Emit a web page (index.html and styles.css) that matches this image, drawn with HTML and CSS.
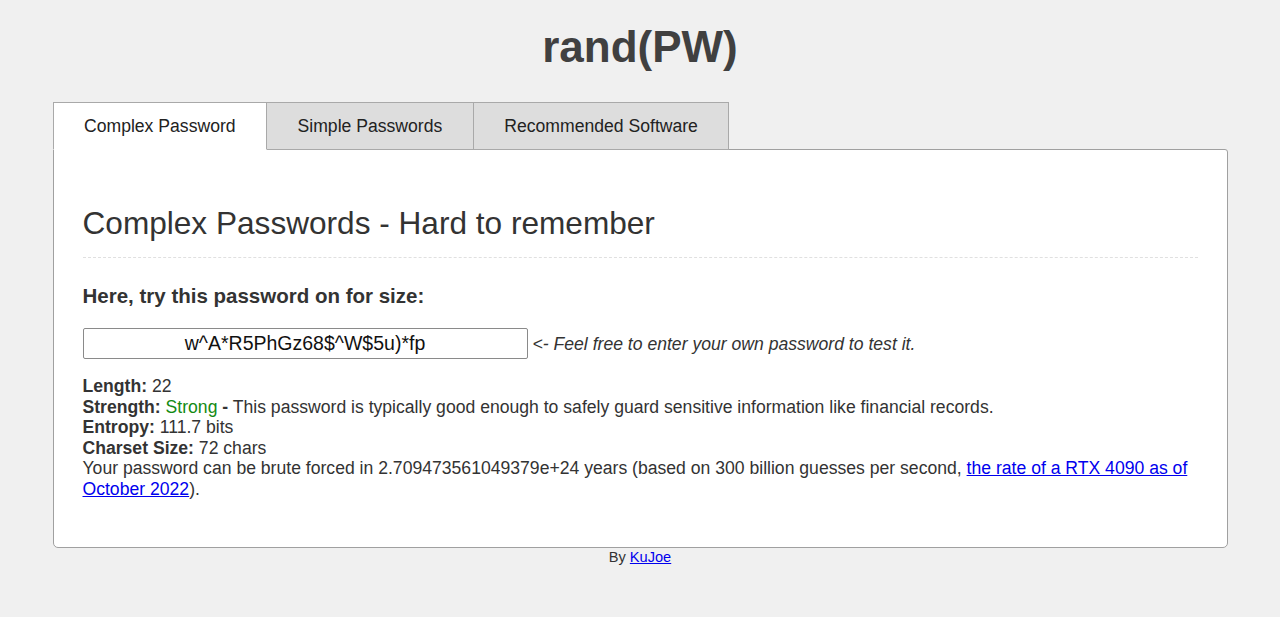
FILE: index.html
```html
<!DOCTYPE html>
<html>
<head>
<meta charset="utf-8">
<title>rand(PW)</title>
<link rel="stylesheet" href="styles.css">
</head>
<body>
<h1 class="site-title">rand(PW)</h1>
<div class="wrap">
  <div class="tabs">
    <div class="tab active">Complex Password</div>
    <div class="tab">Simple Passwords</div>
    <div class="tab">Recommended Software</div>
  </div>
  <div class="panel">
    <h2 class="panel-title">Complex Passwords - Hard to remember</h2>
    <h3 class="lead">Here, try this password on for size:</h3>
    <div class="pw-row">
      <input class="pw-input" type="text" value="w^A*R5PhGz68$^W$5u)*fp">
      <span class="pw-note">&lt;- Feel free to enter your own password to test it.</span>
    </div>
    <div class="stats">
      <b>Length:</b> 22<br>
      <b>Strength:</b> <span class="strong">Strong</span> <b>-</b> This password is typically good enough to safely guard sensitive information like financial records.<br>
      <b>Entropy:</b> 111.7 bits<br>
      <b>Charset Size:</b> 72 chars<br>
      Your password can be brute forced in 2.709473561049379e+24 years (based on 300 billion guesses per second, <a href="#">the rate of a RTX 4090 as of October 2022</a>).
    </div>
  </div>
  <div class="footer">By <a href="#">KuJoe</a></div>
</div>
</body>
</html>
```
FILE: styles.css
```css
html, body {
  margin: 0;
  padding: 0;
  background: #f0f0f0;
  font-family: "Liberation Sans", Arial, sans-serif;
  color: #333;
}
.site-title {
  margin: 21px 0 0 0;
  height: 51px;
  font-size: 44px;
  line-height: 51px;
  font-weight: bold;
  text-align: center;
  color: #404040;
}
.wrap {
  width: 1175px;
  margin: 30px auto 0 auto;
}
.tabs {
  display: flex;
  position: relative;
  z-index: 1;
  margin-bottom: -1px;
}
.tab {
  box-sizing: border-box;
  height: 48px;
  padding: 0 30.5px;
  line-height: 46px;
  font-size: 17.6px;
  color: #222;
  background: #dddddd;
  border: 1px solid #a9a9a9;
  border-left: none;
  white-space: nowrap;
}
.tab:first-child {
  border-left: 1px solid #a9a9a9;
}
.tab.active {
  background: #fff;
  border-bottom-color: #fff;
}
.panel {
  background: #fff;
  border: 1px solid #a0a0a0;
  border-radius: 0 3px 5px 5px;
  padding: 56px 29px 47px 29px;
}
.panel-title {
  margin: 0;
  font-size: 31.6px;
  font-weight: normal;
  line-height: 35px;
  color: #333;
  padding-bottom: 16px;
  border-bottom: 1px dashed #e0e0e0;
}
.lead {
  margin: 26px 0 0 0;
  font-size: 20.5px;
  line-height: 24px;
  font-weight: bold;
  color: #333;
}
.pw-row {
  display: flex;
  align-items: center;
  margin-top: 20px;
}
.pw-input {
  box-sizing: border-box;
  width: 445px;
  height: 31px;
  border: 1px solid #8a8a8a;
  border-radius: 2px;
  font-family: "Liberation Sans", Arial, sans-serif;
  font-size: 19.5px;
  color: #111;
  text-align: center;
  padding: 0;
  margin: 0;
}
.pw-note {
  margin-left: 5px;
  margin-top: 2px;
  font-size: 17.6px;
  font-style: italic;
  color: #333;
}
.stats {
  margin-top: 17px;
  font-size: 17.6px;
  line-height: 20.6px;
  color: #333;
}
.stats b {
  color: #333;
}
.strong {
  color: #138a13;
}
a {
  color: #0000ee;
}
.footer {
  text-align: center;
  font-size: 14.6px;
  line-height: 17px;
  margin-top: 1px;
  color: #333;
}
```
